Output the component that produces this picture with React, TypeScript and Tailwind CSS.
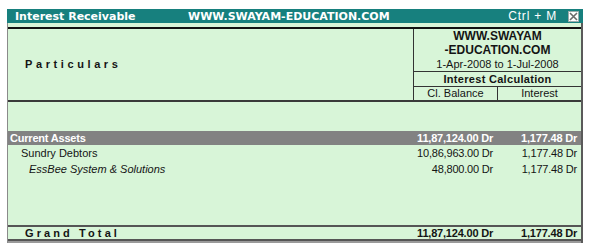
import React from 'react';

interface Row {
    label: string;
    balance: string;
    interest: string;
    kind: 'group' | 'ledger' | 'party';
}

const rows: Row[] = [
    { label: 'Current Assets', balance: '11,87,124.00 Dr', interest: '1,177.48 Dr', kind: 'group' },
    { label: 'Sundry Debtors', balance: '10,86,963.00 Dr', interest: '1,177.48 Dr', kind: 'ledger' },
    { label: 'EssBee System & Solutions', balance: '48,800.00 Dr', interest: '1,177.48 Dr', kind: 'party' },
];

const sans = { fontFamily: '"Liberation Sans", Arial, sans-serif' };
const title = { fontFamily: '"DejaVu Sans", Verdana, sans-serif' };

const CloseBox: React.FC = () => (
    <span className="flex h-[11px] w-[11px] items-center justify-center border border-[#9aa] bg-white">
        <svg width="9" height="9" viewBox="0 0 9 9">
            <path d="M1 1 L8 8 M8 1 L1 8" stroke="#6b6b6b" strokeWidth="1.6" />
        </svg>
    </span>
);

const App: React.FC = () => {
    return (
        <div className="h-[250px] w-[589px] bg-white pt-[9px] pl-[7px] text-[#141414]" style={sans}>
            <div className="flex h-[234px] w-[576px] flex-col">
                {/* title bar */}
                <div className="flex h-[14px] shrink-0 items-center bg-[#17807e] text-white">
                    <span className="w-[181px] pl-[8px] text-[11px] font-bold leading-none" style={title}>
                        Interest Receivable
                    </span>
                    <span className="text-[11px] font-bold leading-none" style={title}>
                        WWW.SWAYAM-EDUCATION.COM
                    </span>
                    <span className="ml-auto mr-[11px] text-[12px] leading-none tracking-[0.8px]">Ctrl + M</span>
                    <span className="mr-[4px]">
                        <CloseBox />
                    </span>
                </div>

                {/* body */}
                <div className="flex flex-1 flex-col border-r-2 border-l border-r-[#5a5a5a] border-l-[#8a8a8a] bg-[#d8f5d8]">
                    <div className="mt-[4px] h-[2px] shrink-0 bg-[#111]" />

                    {/* column header */}
                    <div className="flex h-[73px] shrink-0 border-b-2 border-[#3a3a3a]">
                        <div className="flex flex-1 items-center pl-[17px] text-[11px] font-bold tracking-[3.6px]">
                            Particulars
                        </div>
                        <div className="flex w-[168px] flex-col border-l border-[#333] text-center">
                            <div className="flex flex-1 flex-col justify-center border-b border-[#333] leading-[14px]">
                                <span className="text-[12px] font-bold">WWW.SWAYAM</span>
                                <span className="text-[12px] font-bold">-EDUCATION.COM</span>
                                <span className="text-[11px]">1-Apr-2008 to 1-Jul-2008</span>
                            </div>
                            <div className="h-[15px] border-b border-[#333] text-[11px] leading-[14px] font-bold tracking-[0.3px]">
                                Interest Calculation
                            </div>
                            <div className="flex h-[13px] text-[11px] leading-[13px]">
                                <span className="w-[84px] border-r border-[#333]">Cl. Balance</span>
                                <span className="flex-1">Interest</span>
                            </div>
                        </div>
                    </div>

                    <div className="h-[29px] shrink-0" />

                    {rows.map(row => {
                        const group = row.kind === 'group';
                        return (
                            <div
                                key={row.label}
                                className={
                                    group
                                        ? 'flex h-[14px] shrink-0 items-center bg-[#828282] text-[11px] font-bold text-white'
                                        : 'flex h-[16px] shrink-0 items-center text-[11px]'
                                }
                            >
                                <span
                                    className={
                                        row.kind === 'group'
                                            ? 'flex-1 pl-[2px] tracking-[-0.2px]'
                                            : row.kind === 'ledger'
                                              ? 'flex-1 pl-[13px]'
                                              : 'flex-1 pl-[21px] italic'
                                    }
                                >
                                    {row.label}
                                </span>
                                <span className="w-[84px] pr-[4px] text-right tracking-[-0.2px]">{row.balance}</span>
                                <span className="w-[84px] pr-[4px] text-right tracking-[-0.2px]">{row.interest}</span>
                            </div>
                        );
                    })}

                    <div className="flex-1" />

                    {/* grand total */}
                    <div className="flex h-[16px] shrink-0 items-center border-t-2 border-b-2 border-[#555] text-[11px] font-bold">
                        <span className="flex-1 pl-[17px] tracking-[3.1px]">Grand Total</span>
                        <span className="w-[84px] pr-[4px] text-right tracking-[-0.2px]">11,87,124.00 Dr</span>
                        <span className="w-[84px] pr-[4px] text-right tracking-[-0.2px]">1,177.48 Dr</span>
                    </div>
                    <div className="h-[2px] shrink-0 bg-[#9a9a9a]" />
                </div>
            </div>
        </div>
    );
};

export default App;
